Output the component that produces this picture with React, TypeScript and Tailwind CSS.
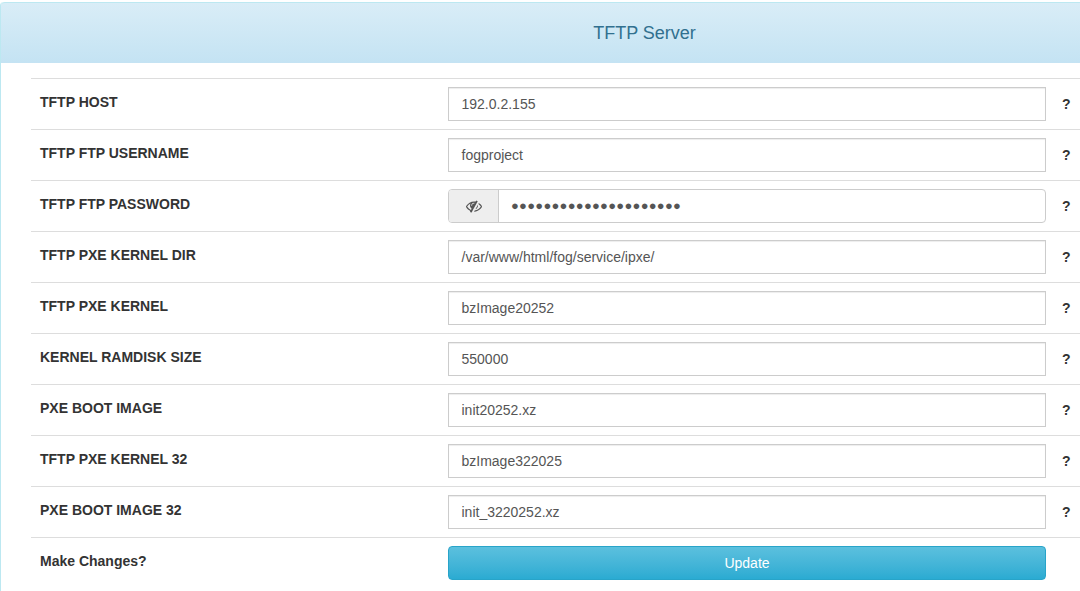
const rows = [
  { label: "TFTP HOST", value: "192.0.2.155" },
  { label: "TFTP FTP USERNAME", value: "fogproject" },
  { label: "TFTP FTP PASSWORD", value: "", secret: "●●●●●●●●●●●●●●●●●●●●●" },
  { label: "TFTP PXE KERNEL DIR", value: "/var/www/html/fog/service/ipxe/" },
  { label: "TFTP PXE KERNEL", value: "bzImage20252" },
  { label: "KERNEL RAMDISK SIZE", value: "550000" },
  { label: "PXE BOOT IMAGE", value: "init20252.xz" },
  { label: "TFTP PXE KERNEL 32", value: "bzImage322025" },
  { label: "PXE BOOT IMAGE 32", value: "init_3220252.xz" },
];

function EyeSlash() {
  return (
    <svg viewBox="0 0 1792 1792" className="h-4 w-4 fill-current">
      <path d="M555 1335l78-141q-87-63-136-159t-49-203q0-121 61-225-229 117-381 353 167 258 427 375zm389-759q0-20-14-34t-34-14q-125 0-214.5 89.5t-89.5 214.5q0 20 14 34t34 14 34-14 14-34q0-86 61-147t147-61q20 0 34-14t14-34zm363-191q0 7-1 9-106 189-316 567t-315 566l-49 89q-10 16-28 16-12 0-134-70-16-10-16-28 0-12 44-87-143-65-263.5-173t-208.5-245q-20-31-20-69t20-69q153-235 380-371t496-136q89 0 180 17l54-97q10-16 28-16 5 0 18 6t31 15.5 33 18.5 31.5 18.5 19.5 11.5q16 10 16 27zm37 447q0 139-79 253.5t-209 164.5l280-502q8 45 8 84zm448 128q0 35-20 69-39 64-109 145-150 172-347.5 267t-419.5 95l74-132q212-18 392.5-137t301.5-307q-115-179-282-294l63-112q95 64 182.5 153t144.5 184q20 34 20 69z" />
    </svg>
  );
}

function Row({ label, value, secret }: { label: string; value: string; secret?: string }) {
  return (
    <div className="flex h-[51px] border-t border-[#dddddd]">
      <div className="w-[417px] shrink-0 pl-[9px] pt-[13px] text-[14px] leading-[20px] font-bold uppercase text-[#333333]">
        {label}
      </div>
      <div className="pt-2">
        {secret ? (
          <div className="flex h-[34px] w-[598px] rounded border border-[#cccccc] bg-white">
            <div className="flex w-[50px] shrink-0 items-center justify-center rounded-l-[3px] border-r border-[#cccccc] bg-[#eeeeee] text-[#555555]">
              <EyeSlash />
            </div>
            <div className="flex-1 truncate pl-3 pt-[9px] text-[13px] leading-[14px] tracking-[0.25px] text-[#555555]">
              {secret}
            </div>
          </div>
        ) : (
          <div className="h-[34px] w-[598px] border border-[#cccccc] bg-white py-[6px] pl-[12.5px] pr-3 text-[14px] leading-[20px] text-[#555555] shadow-[inset_0_1px_1px_rgba(0,0,0,0.075)]">
            {value}
          </div>
        )}
      </div>
      <div className="pl-[16px] pt-[15px] text-[14px] leading-[20px] font-bold text-[#333333]">?</div>
    </div>
  );
}

export default function App() {
  return (
    <div className="h-[591px] overflow-hidden bg-white pt-[2px] font-['Liberation_Sans',Arial,sans-serif]">
      <div className="h-full border-l border-[#bce8f1] rounded-tl">
        <div className="flex h-[61px] items-center justify-center rounded-tl border-t border-[#bce8f1] bg-gradient-to-b from-[#d9edf7] to-[#c4e3f3] pb-[1px] pl-[208px]">
          <h3 className="text-[18px] leading-[20px] text-[#31708f]">TFTP Server</h3>
        </div>
        <div className="pl-[30px] pt-[15px]">
          {rows.map((row) => (
            <Row key={row.label} {...row} />
          ))}
          <div className="flex border-t border-[#dddddd]">
            <div className="w-[417px] shrink-0 pl-[9px] pt-[13px] text-[14px] leading-[20px] font-bold text-[#333333]">
              Make Changes?
            </div>
            <div className="pt-2">
              <button className="h-[34px] w-[598px] rounded border border-[#28a4c9] bg-gradient-to-b from-[#5bc0de] to-[#2aabd2] text-[14px] text-white">
                Update
              </button>
            </div>
          </div>
        </div>
      </div>
    </div>
  );
}
